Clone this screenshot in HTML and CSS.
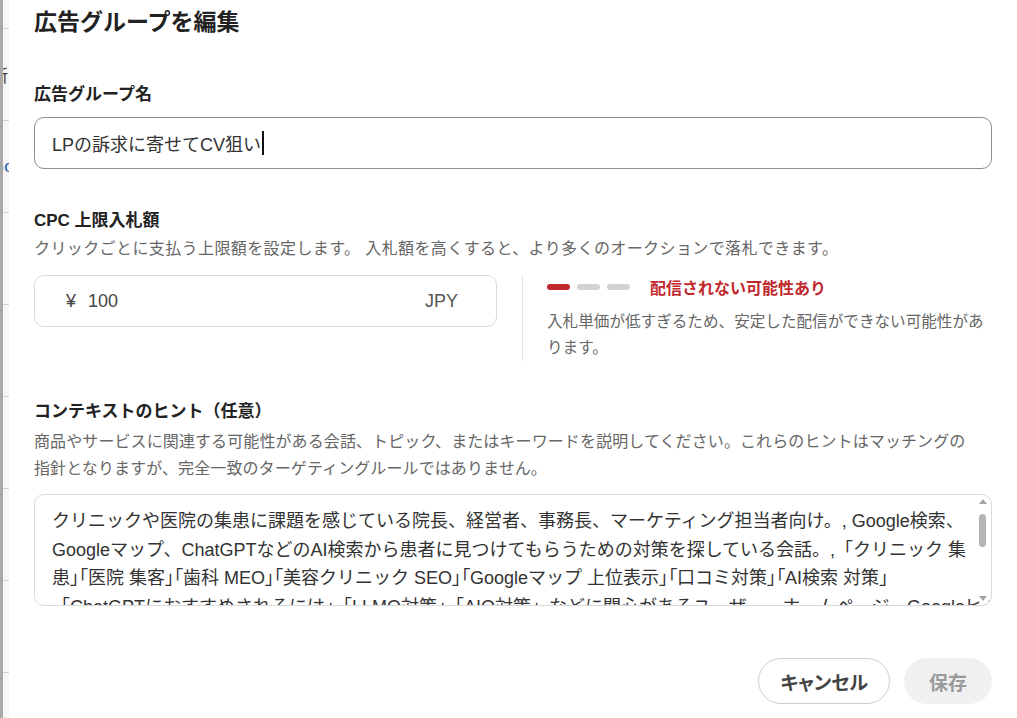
FILE: index.html
```html
<!DOCTYPE html>
<html lang="ja">
<head>
    <meta charset="UTF-8">
    <meta name="viewport" content="width=device-width, initial-scale=1.0">
    <title>広告グループを編集</title>
    <link rel="stylesheet" href="styles.css">
</head>
<body>
    <div class="page">
        <div class="behind">
            <div class="behind-row behind-head"></div>
            <div class="behind-row"><span class="behind-text">新</span></div>
            <div class="behind-row"><span class="behind-text behind-link">Go</span></div>
            <div class="behind-row"></div>
            <div class="behind-row"></div>
            <div class="behind-row"></div>
            <div class="behind-row"></div>
            <div class="behind-row"></div>
        </div>

        <div class="dialog">
            <h1 class="dialog-title">広告グループを編集</h1>

            <div class="field">
                <label class="field-label">広告グループ名</label>
                <div class="text-input">LPの訴求に寄せてCV狙い<span class="caret"></span></div>
            </div>

            <div class="field">
                <label class="field-label">CPC 上限入札額</label>
                <p class="field-help">クリックごとに支払う上限額を設定します。 入札額を高くすると、より多くのオークションで落札できます。</p>
                <div class="bid-row">
                    <div class="amount-input">
                        <span class="amount"><span class="yen">¥</span>100</span>
                        <span class="currency">JPY</span>
                    </div>
                    <div class="bid-status">
                        <div class="strength">
                            <span class="pill pill-on"></span>
                            <span class="pill"></span>
                            <span class="pill"></span>
                            <span class="strength-label">配信されない可能性あり</span>
                        </div>
                        <p class="status-note">入札単価が低すぎるため、安定した配信ができない可能性があ<br>ります。</p>
                    </div>
                </div>
            </div>

            <div class="field field-hint">
                <label class="field-label">コンテキストのヒント（任意）</label>
                <p class="field-help hint-help">商品やサービスに関連する可能性がある会話、トピック、またはキーワードを説明してください。これらのヒントはマッチングの<br>指針となりますが、完全一致のターゲティングルールではありません。</p>
                <div class="hint-box">
                    <span class="hint-line">クリニックや医院の集患に課題を感じている院長、経営者、事務長、マーケティング担当者向け。, Google検索、</span>
                    <span class="hint-line">Googleマップ、ChatGPTなどのAI検索から患者に見つけてもらうための対策を探している会話。,「クリニック 集</span>
                    <span class="hint-line">患<span class="pq">」「</span>医院 集客<span class="pq">」「</span>歯科 MEO<span class="pq">」「</span>美容クリニック SEO<span class="pq">」「</span>Googleマップ 上位表示<span class="pq">」「</span>口コミ対策<span class="pq">」「</span>AI検索 対策」</span>
                    <span class="hint-line">「ChatGPTにおすすめされるには」「LLMO対策」「AIO対策」などに関心があるユーザー、ホームページ、Googleビジ</span>
                    <div class="hint-scroll">
                        <span class="scroll-up"></span>
                        <span class="scroll-thumb"></span>
                        <span class="scroll-down"></span>
                    </div>
                </div>
            </div>

            <div class="actions">
                <button class="btn btn-cancel">キャンセル</button>
                <button class="btn btn-save" disabled>保存</button>
            </div>
        </div>
    </div>
</body>
</html>
```

FILE: styles.css
```css
body {
    margin: 0;
    background: #fff;
    font-family: "Liberation Sans", "Noto Sans CJK JP", sans-serif;
    color: #222;
    overflow: hidden;
}
.page {
    display: flex;
    height: 100vh;
}

/* strip of the list page showing at the left edge */
.behind {
    flex: 0 0 6px;
    border-left: 3px solid #a9a9a9;
    background: #f6f6f6;
    overflow: hidden;
}
.behind-row {
    height: 91px;
    border-bottom: 1px solid #cfcfcf;
    display: flex;
    align-items: center;
    white-space: nowrap;
}
.behind-head {
    height: 28px;
}
.behind-text {
    margin-left: -12px;
    font-size: 17px;
    color: #333;
}
.behind-link {
    color: #1a56b0;
}

.dialog {
    flex: 1;
    min-width: 0;
    padding: 6px 25px 0 25px;
    background: #fff;
}
.dialog-title {
    margin: 0 0 45px;
    font-size: 23px;
    line-height: 32px;
    font-weight: 700;
}
.field + .field {
    margin-top: 40px;
}
.field-hint {
    margin-top: 39px !important;
}
.field-label {
    display: block;
    font-size: 17px;
    line-height: 24px;
    font-weight: 700;
    color: #222;
}
.field-help {
    margin: 3px 0 0;
    font-size: 16px;
    line-height: 26px;
    letter-spacing: 0.4px;
    color: #666;
}
.hint-help {
    margin-top: 4px;
    line-height: 27px;
    letter-spacing: 0.1px;
}

.text-input {
    margin-top: 10px;
    height: 52px;
    box-sizing: border-box;
    border: 1.5px solid #8c8c8c;
    border-radius: 10px;
    padding: 0 17px;
    display: flex;
    align-items: center;
    font-size: 18px;
    color: #333;
}
.caret {
    width: 1.5px;
    height: 24px;
    background: #111;
    margin-left: 1px;
}

.bid-row {
    display: flex;
    margin-top: 13px;
}
.amount-input {
    width: 463px;
    height: 52px;
    box-sizing: border-box;
    border: 1px solid #dadada;
    border-radius: 10px;
    padding: 0 38px 0 31px;
    display: flex;
    justify-content: space-between;
    align-items: center;
    font-size: 18px;
    color: #444;
}
.yen {
    margin-right: 12px;
}
.currency {
    color: #555;
}
.bid-status {
    flex: 1;
    min-width: 0;
    margin-left: 25px;
    padding-left: 24px;
    border-left: 1px solid #e4e4e4;
}
.strength {
    height: 24px;
    display: flex;
    align-items: center;
    gap: 7px;
}
.pill {
    width: 23px;
    height: 6px;
    border-radius: 3px;
    background: #d2d2d2;
}
.pill-on {
    background: #c0282d;
}
.strength-label {
    margin-left: 13px;
    font-size: 16px;
    font-weight: 700;
    color: #c0282d;
}
.status-note {
    margin: 10px 0 0;
    font-size: 15.6px;
    line-height: 26px;
    white-space: nowrap;
    color: #666;
}

.hint-box {
    position: relative;
    margin-top: 12px;
    height: 112px;
    box-sizing: border-box;
    border: 1px solid #dadada;
    border-radius: 10px;
    padding: 12px 40px 0 17px;
    overflow: hidden;
    font-size: 18px;
    line-height: 28.5px;
    color: #333;
}
.hint-line {
    display: block;
    white-space: nowrap;
}
.pq {
    font-feature-settings: "palt";
}
.hint-scroll {
    position: absolute;
    top: 4px;
    right: 2px;
    bottom: 4px;
    width: 12px;
    background: #fff;
}
.scroll-up,
.scroll-down {
    position: absolute;
    left: 2px;
    width: 0;
    height: 0;
    border-left: 4px solid transparent;
    border-right: 4px solid transparent;
}
.scroll-up {
    top: 0;
    border-bottom: 5px solid #a3a3a3;
}
.scroll-down {
    bottom: 0;
    border-top: 5px solid #a3a3a3;
}
.scroll-thumb {
    position: absolute;
    top: 15px;
    left: 2px;
    width: 7px;
    height: 33px;
    border-radius: 4px;
    background: #b4b4b4;
}

.actions {
    margin-top: 52px;
    display: flex;
    justify-content: flex-end;
    gap: 14px;
}
.btn {
    height: 46px;
    padding: 0 21px;
    border: 1.5px solid #cfcfcf;
    border-radius: 23px;
    background: #fff;
    font-family: inherit;
    font-size: 19px;
    font-weight: 700;
    color: #444;
}
.btn-cancel {
    font-feature-settings: "palt";
}
.btn-save {
    padding: 0 24px;
    border-color: #f0f0f0;
    background: #f0f0f0;
    color: #9a9a9a;
}
```
